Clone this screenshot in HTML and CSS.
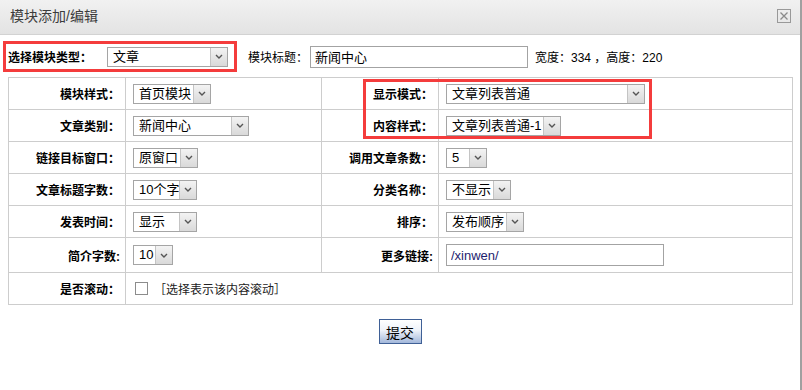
FILE: index.html
```html
<!DOCTYPE html>
<html lang="zh-CN">
<head>
    <meta charset="UTF-8">
    <meta name="viewport" content="width=device-width, initial-scale=1.0">
    <title>模块添加/编辑</title>
    <link rel="stylesheet" href="styles.css">
</head>
<body>
<div class="dialog">
    <div class="dialog-head">
        <span class="dialog-title">模块添加/编辑</span>
        <span class="close-btn">
            <svg width="12" height="12" viewBox="0 0 12 12"><path d="M2.5 2.5 L9.5 9.5 M9.5 2.5 L2.5 9.5" stroke="#8a8a8a" stroke-width="1.3" fill="none"/></svg>
        </span>
    </div>

    <div class="topbar">
        <div class="type-box">
            <span class="type-label">选择模块类型：</span>
            <span class="sel sel-121"><span class="sel-text">文章</span><span class="sel-arrow"><svg width="8" height="5" viewBox="0 0 8 5"><path d="M1 1 L4 4 L7 1" stroke="#555" stroke-width="1.4" fill="none"/></svg></span></span>
        </div>
        <span class="title-label">模块标题：</span>
        <input class="txt" type="text" value="新闻中心">
        <span class="size-info">宽度：334 ，高度：220</span>
    </div>

    <div class="table-wrap">
        <table class="form-table">
            <colgroup>
                <col class="c-label">
                <col class="c-value">
                <col class="c-label">
                <col class="c-value-wide">
            </colgroup>
            <tr>
                <td class="lbl">模块样式：</td>
                <td class="val"><span class="sel sel-78"><span class="sel-text">首页模块</span><span class="sel-arrow"><svg width="8" height="5" viewBox="0 0 8 5"><path d="M1 1 L4 4 L7 1" stroke="#555" stroke-width="1.4" fill="none"/></svg></span></span></td>
                <td class="lbl">显示模式：</td>
                <td class="val"><span class="sel sel-199"><span class="sel-text">文章列表普通</span><span class="sel-arrow"><svg width="8" height="5" viewBox="0 0 8 5"><path d="M1 1 L4 4 L7 1" stroke="#555" stroke-width="1.4" fill="none"/></svg></span></span></td>
            </tr>
            <tr>
                <td class="lbl">文章类别：</td>
                <td class="val"><span class="sel sel-116"><span class="sel-text">新闻中心</span><span class="sel-arrow"><svg width="8" height="5" viewBox="0 0 8 5"><path d="M1 1 L4 4 L7 1" stroke="#555" stroke-width="1.4" fill="none"/></svg></span></span></td>
                <td class="lbl">内容样式：</td>
                <td class="val"><span class="sel sel-115"><span class="sel-text">文章列表普通-1</span><span class="sel-arrow"><svg width="8" height="5" viewBox="0 0 8 5"><path d="M1 1 L4 4 L7 1" stroke="#555" stroke-width="1.4" fill="none"/></svg></span></span></td>
            </tr>
            <tr>
                <td class="lbl">链接目标窗口：</td>
                <td class="val"><span class="sel sel-65"><span class="sel-text">原窗口</span><span class="sel-arrow"><svg width="8" height="5" viewBox="0 0 8 5"><path d="M1 1 L4 4 L7 1" stroke="#555" stroke-width="1.4" fill="none"/></svg></span></span></td>
                <td class="lbl">调用文章条数：</td>
                <td class="val"><span class="sel sel-41"><span class="sel-text">5</span><span class="sel-arrow"><svg width="8" height="5" viewBox="0 0 8 5"><path d="M1 1 L4 4 L7 1" stroke="#555" stroke-width="1.4" fill="none"/></svg></span></span></td>
            </tr>
            <tr>
                <td class="lbl">文章标题字数：</td>
                <td class="val"><span class="sel sel-64"><span class="sel-text">10个字</span><span class="sel-arrow"><svg width="8" height="5" viewBox="0 0 8 5"><path d="M1 1 L4 4 L7 1" stroke="#555" stroke-width="1.4" fill="none"/></svg></span></span></td>
                <td class="lbl">分类名称：</td>
                <td class="val"><span class="sel sel-65"><span class="sel-text">不显示</span><span class="sel-arrow"><svg width="8" height="5" viewBox="0 0 8 5"><path d="M1 1 L4 4 L7 1" stroke="#555" stroke-width="1.4" fill="none"/></svg></span></span></td>
            </tr>
            <tr>
                <td class="lbl">发表时间：</td>
                <td class="val"><span class="sel sel-64"><span class="sel-text">显示</span><span class="sel-arrow"><svg width="8" height="5" viewBox="0 0 8 5"><path d="M1 1 L4 4 L7 1" stroke="#555" stroke-width="1.4" fill="none"/></svg></span></span></td>
                <td class="lbl">排序：</td>
                <td class="val"><span class="sel sel-78"><span class="sel-text">发布顺序</span><span class="sel-arrow"><svg width="8" height="5" viewBox="0 0 8 5"><path d="M1 1 L4 4 L7 1" stroke="#555" stroke-width="1.4" fill="none"/></svg></span></span></td>
            </tr>
            <tr class="tall">
                <td class="lbl">简介字数:</td>
                <td class="val"><span class="sel sel-40"><span class="sel-text">10</span><span class="sel-arrow"><svg width="8" height="5" viewBox="0 0 8 5"><path d="M1 1 L4 4 L7 1" stroke="#555" stroke-width="1.4" fill="none"/></svg></span></span></td>
                <td class="lbl">更多链接:</td>
                <td class="val"><input class="txt link-txt" type="text" value="/xinwen/"></td>
            </tr>
            <tr>
                <td class="lbl">是否滚动：</td>
                <td class="val" colspan="3"><span class="chk"></span><span class="chk-note">［选择表示该内容滚动］</span></td>
            </tr>
        </table>
        <div class="highlight"></div>
    </div>

    <div class="actions">
        <button class="submit" type="button">提交</button>
    </div>
</div>
</body>
</html>
```

FILE: styles.css
```css
html, body {
    margin: 0;
    padding: 0;
    background-color: #fff;
}
body {
    font-family: "Liberation Sans", "Noto Sans CJK SC", sans-serif;
    font-size: 12px;
    color: #000;
}

.dialog {
    width: 800px;
    height: 390px;
    border-right: 2px solid #a0a0a0;
}

.dialog-head {
    height: 34px;
    display: flex;
    align-items: center;
    justify-content: space-between;
    padding: 0 10px 0 10px;
    background: linear-gradient(#f1f1f1, #e3e3e3);
    border-bottom: 1px solid #d2d2d2;
}
.dialog-title {
    font-size: 14px;
    color: #3c3c3c;
    line-height: 20px;
    margin-top: -2px;
}
.close-btn {
    width: 12px;
    height: 12px;
    border: 1px solid #999;
    display: flex;
    margin-right: -1px;
    margin-top: -2px;
}

.topbar {
    display: flex;
    align-items: center;
    padding: 6px 0 5px 3px;
}
.type-box {
    display: flex;
    align-items: center;
    height: 25px;
    padding: 0 6px 0 2px;
    border: 3px solid #f43c3c;
}
.type-label {
    font-weight: bold;
    width: 99px;
}
.title-label {
    margin-left: 11px;
    width: 62px;
}
.size-info {
    margin-left: 7px;
}

.txt {
    box-sizing: border-box;
    width: 218px;
    height: 22px;
    margin: 0;
    padding: 0 4px;
    border: 1px solid #a3a3a3;
    font-family: "Liberation Sans", "Noto Sans CJK SC", sans-serif;
    font-size: 13px;
    color: #000;
    outline: none;
}
.link-txt {
    color: #1d1d6e;
}

/* fake select boxes */
.sel {
    box-sizing: border-box;
    display: inline-flex;
    height: 20px;
    border: 1px solid #a5a5a5;
    background-color: #fff;
    vertical-align: middle;
}
.sel-text {
    flex: 1;
    padding-left: 5px;
    font-size: 13px;
    line-height: 18px;
    white-space: nowrap;
    overflow: hidden;
}
.sel-arrow {
    width: 16px;
    display: flex;
    align-items: center;
    justify-content: center;
    background: linear-gradient(#f3f3f3, #d9d9d9);
    border-left: 1px solid #c4c4c4;
}
.sel-40 { width: 40px; }
.sel-41 { width: 41px; }
.sel-64 { width: 64px; }
.sel-65 { width: 65px; }
.sel-78 { width: 78px; }
.sel-115 { width: 115px; }
.sel-116 { width: 116px; }
.sel-121 { width: 121px; }
.sel-199 { width: 199px; }

.table-wrap {
    position: relative;
    margin-left: 8px;
    width: 784px;
}
.form-table {
    width: 784px;
    border-collapse: collapse;
    table-layout: fixed;
}
.c-label { width: 117px; }
.c-value { width: 196px; }
.c-value-wide { width: 354px; }
.form-table td {
    border: 1px solid #cdcdcd;
    height: 31px;
    padding: 0;
}
.form-table tr.tall td {
    height: 34px;
}
.lbl {
    text-align: right;
    font-weight: bold;
    padding-right: 5px !important;
}
.val {
    padding-left: 7px !important;
}

.highlight {
    position: absolute;
    left: 355px;
    top: 2px;
    width: 283px;
    height: 54px;
    border: 3px solid #f43c3c;
}

.chk {
    display: inline-block;
    box-sizing: border-box;
    width: 13px;
    height: 13px;
    margin-left: 2px;
    border: 1px solid #8c8c8c;
    vertical-align: middle;
}
.chk-note {
    margin-left: 6px;
    color: #222;
    vertical-align: middle;
}

.actions {
    display: flex;
    justify-content: center;
    padding-top: 14px;
}
.submit {
    width: 43px;
    height: 25px;
    padding: 0;
    border: 1px solid #3f6096;
    background: linear-gradient(#ffffff, #eef2f9 45%, #a2b7da);
    font-family: "Noto Sans CJK SC", sans-serif;
    font-size: 14px;
    color: #000;
    cursor: pointer;
}
```
